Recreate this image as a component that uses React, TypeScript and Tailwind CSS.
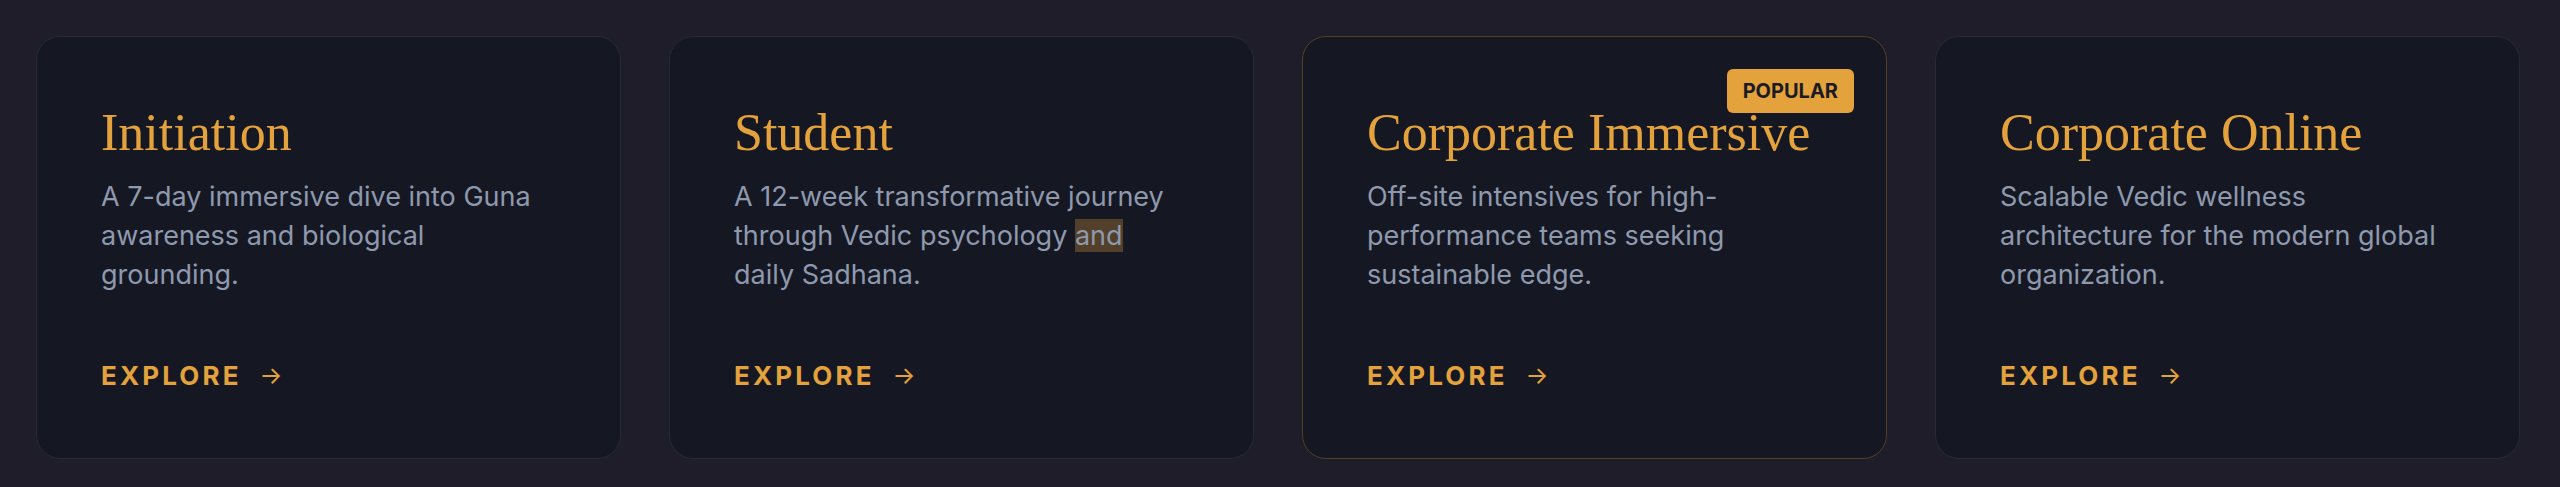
const PROGRAMS = [
  {
    title: "Initiation",
    body: <>A 7-day immersive dive into Guna awareness and biological grounding.</>,
  },
  {
    title: "Student",
    body: (
      <>
        A 12-week transformative journey through Vedic psychology{" "}
        <span className="bg-[#52402a]">and</span> daily Sadhana.
      </>
    ),
  },
  {
    title: "Corporate Immersive",
    body: <>Off-site intensives for high-performance teams seeking sustainable edge.</>,
    popular: true,
  },
  {
    title: "Corporate Online",
    body: <>Scalable Vedic wellness architecture for the modern global organization.</>,
  },
];

export default function App() {
  return (
    <div className="min-h-screen bg-[#1f1d2a] pl-9 pr-10 pt-9 pb-8 font-['Inter',sans-serif]">
      <div className="grid grid-cols-4 gap-12">
        {PROGRAMS.map((p) => (
          <div
            key={p.title}
            className={`relative flex flex-col rounded-3xl border bg-[#151823] p-16 ${
              p.popular ? "border-[#533f22]" : "border-[#242a37]"
            }`}
          >
            {p.popular && (
              <span className="absolute right-8 top-8 rounded-md bg-[#e4a23c] px-4 py-2 text-xl font-bold leading-7 text-[#1a1b24]">
                POPULAR
              </span>
            )}
            <h3 className="font-['Liberation_Serif',serif] text-[52px] leading-[64px] text-[#e4a23c]">
              {p.title}
            </h3>
            <p className="mt-3 text-[27px] leading-[39px] text-[#8f99ae]">{p.body}</p>
            <a className="mt-16 flex items-center gap-[18px] text-[26px] font-bold uppercase leading-9 tracking-[0.12em] text-[#e4a23c]">
              <span>Explore</span>
              <span className="text-2xl font-normal tracking-normal">→</span>
            </a>
          </div>
        ))}
      </div>
    </div>
  );
}
